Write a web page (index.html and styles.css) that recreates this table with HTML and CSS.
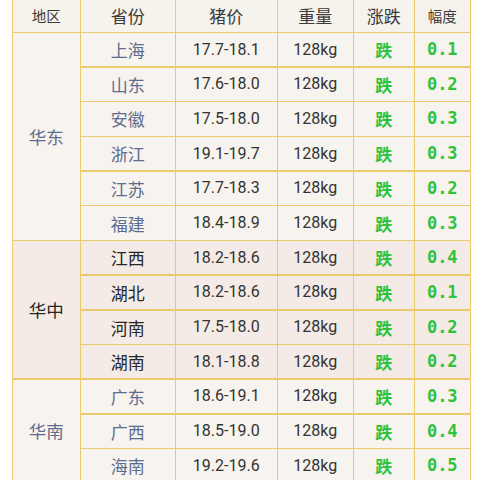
FILE: index.html
```html
<!DOCTYPE html>
<html lang="zh">
<head>
<meta charset="utf-8">
<link rel="stylesheet" href="styles.css">
</head>
<body>
<div class="table">
  <div class="cell head h-sm">地区</div>
  <div class="cell head">省份</div>
  <div class="cell head">猪价</div>
  <div class="cell head">重量</div>
  <div class="cell head">涨跌</div>
  <div class="cell head h-sm">幅度</div>

  <div class="cell region blue east">华东</div>
  <div class="cell prov blue">上海</div><div class="cell num">17.7-18.1</div><div class="cell num">128kg</div><div class="cell fall">跌</div><div class="cell amp">0.1</div>
  <div class="cell prov blue">山东</div><div class="cell num">17.6-18.0</div><div class="cell num">128kg</div><div class="cell fall">跌</div><div class="cell amp">0.2</div>
  <div class="cell prov blue">安徽</div><div class="cell num">17.5-18.0</div><div class="cell num">128kg</div><div class="cell fall">跌</div><div class="cell amp">0.3</div>
  <div class="cell prov blue">浙江</div><div class="cell num">19.1-19.7</div><div class="cell num">128kg</div><div class="cell fall">跌</div><div class="cell amp">0.3</div>
  <div class="cell prov blue">江苏</div><div class="cell num">17.7-18.3</div><div class="cell num">128kg</div><div class="cell fall">跌</div><div class="cell amp">0.2</div>
  <div class="cell prov blue">福建</div><div class="cell num">18.4-18.9</div><div class="cell num">128kg</div><div class="cell fall">跌</div><div class="cell amp">0.3</div>

  <div class="cell region pink central">华中</div>
  <div class="cell prov pink">江西</div><div class="cell num pink">18.2-18.6</div><div class="cell num pink">128kg</div><div class="cell fall pink">跌</div><div class="cell amp pink">0.4</div>
  <div class="cell prov pink">湖北</div><div class="cell num pink">18.2-18.6</div><div class="cell num pink">128kg</div><div class="cell fall pink">跌</div><div class="cell amp pink">0.1</div>
  <div class="cell prov pink">河南</div><div class="cell num pink">17.5-18.0</div><div class="cell num pink">128kg</div><div class="cell fall pink">跌</div><div class="cell amp pink">0.2</div>
  <div class="cell prov pink">湖南</div><div class="cell num pink">18.1-18.8</div><div class="cell num pink">128kg</div><div class="cell fall pink">跌</div><div class="cell amp pink">0.2</div>

  <div class="cell region blue south">华南</div>
  <div class="cell prov blue">广东</div><div class="cell num">18.6-19.1</div><div class="cell num">128kg</div><div class="cell fall">跌</div><div class="cell amp">0.3</div>
  <div class="cell prov blue">广西</div><div class="cell num">18.5-19.0</div><div class="cell num">128kg</div><div class="cell fall">跌</div><div class="cell amp">0.4</div>
  <div class="cell prov blue">海南</div><div class="cell num">19.2-19.6</div><div class="cell num">128kg</div><div class="cell fall">跌</div><div class="cell amp">0.5</div>
</div>
</body>
</html>
```

FILE: styles.css
```css
html, body {
  margin: 0;
  padding: 0;
  background: #ffffff;
  overflow: hidden;
}

body {
  font-family: "Noto Sans CJK SC", "Roboto", sans-serif;
  padding-left: 11.5px;
}

.table {
  display: grid;
  width: 459.5px;
  box-sizing: border-box;
  grid-template-columns: 66.5px 93.5px 100.5px 74.5px 59.5px 54.5px;
  grid-template-rows: 31.5px repeat(13, 33.2px);
  gap: 1.5px;
  padding: 0 1.5px 1.5px;
  background: #ebc96c;
}

.cell {
  display: flex;
  align-items: center;
  justify-content: center;
  background: #f7f3ee;
  color: #333333;
  line-height: 1;
}

.head {
  background: #f6f2ec;
  color: #3a3a3a;
  font-size: 17px;
}

.h-sm {
  font-size: 14.5px;
}

.region {
  font-size: 17.5px;
  grid-column: 1;
}

.east { grid-row: 2 / span 6; }
.central { grid-row: 8 / span 4; }
.south { grid-row: 12 / span 3; }

.blue { color: #5d6c8f; }

.pink {
  background: #f4ebe6;
}

.region.pink, .prov.pink { color: #262626; }

.prov {
  font-size: 17px;
}

.num {
  font-family: "Roboto", "Noto Sans CJK SC", sans-serif;
  font-size: 16px;
  color: #333333;
}

.fall {
  font-size: 17px;
  font-weight: 700;
  color: #2fc23c;
}

.amp {
  font-family: "DejaVu Sans Mono", monospace;
  font-size: 17px;
  font-weight: 700;
  color: #2fc23c;
}
```
